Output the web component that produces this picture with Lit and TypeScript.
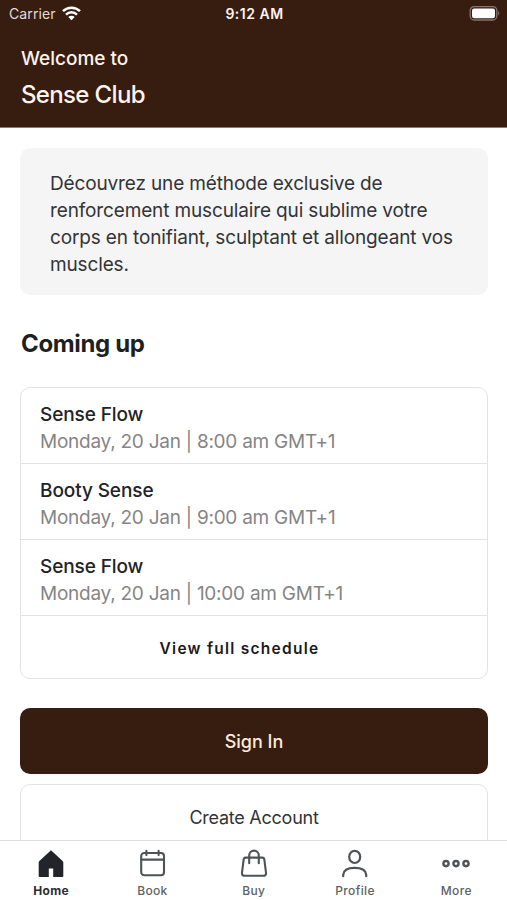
import { LitElement, html, css, svg } from "lit";
import { customElement, property } from "lit/decorators.js";
import { classMap } from "lit/directives/class-map.js";

interface Session {
  title: string;
  time: string;
}

const sessions: Session[] = [
  { title: "Sense Flow", time: "Monday, 20 Jan | 8:00 am GMT+1" },
  { title: "Booty Sense", time: "Monday, 20 Jan | 9:00 am GMT+1" },
  { title: "Sense Flow", time: "Monday, 20 Jan | 10:00 am GMT+1" },
];

const icons = {
  home: svg`<path d="M15 1.2 L26.6 12 Q27.3 12.7 27.3 13.6 V27 Q27.3 28 26.3 28 H17.2 V19.5 H12.8 V28 H3.7 Q2.7 28 2.7 27 V13.6 Q2.7 12.7 3.4 12 Z" fill="currentColor"/>`,
  book: svg`<g fill="none" stroke="currentColor" stroke-width="2.1" stroke-linecap="round">
    <rect x="4.2" y="4" width="22.8" height="22.2" rx="3"/><path d="M4.2 10.6H27M9.4 1.7V6.1M21.6 1.7V6.1"/></g>`,
  buy: svg`<g fill="none" stroke="currentColor" stroke-width="2.1" stroke-linecap="round" stroke-linejoin="round">
    <path d="M6.6 8.6H23.4Q25 8.6 25.3 10.2L27 23.6Q27.3 26.8 24.3 26.8H5.7Q2.7 26.8 3 23.6L4.7 10.2Q5 8.6 6.6 8.6Z"/>
    <path d="M10.2 14.2V6.4A4.8 4.8 0 0 1 19.8 6.4V14.2"/></g>`,
  profile: svg`<g fill="none" stroke="currentColor" stroke-width="2.2" stroke-linecap="round">
    <ellipse cx="14.7" cy="7.9" rx="5.5" ry="6.1"/><path d="M3.2 27.2V25.8Q3.7 18.8 14.7 18.8Q25.7 18.8 26.2 25.8V27.2"/></g>`,
  more: svg`<g fill="none" stroke="currentColor" stroke-width="2.4">
    <circle cx="5" cy="14.6" r="2.6"/><circle cx="15" cy="14.6" r="2.6"/><circle cx="25" cy="14.6" r="2.6"/></g>`,
};

type IconName = keyof typeof icons;

@customElement("tab-item")
class TabItem extends LitElement {
  @property() icon: IconName = "home";
  @property() label = "";
  @property({ type: Boolean }) active = false;

  static styles = css`
    :host { display: block; flex: 1; }
    .tab { display: flex; flex-direction: column; align-items: center; color: #505356; }
    .icon { width: 30px; height: 30px; display: block; }
    .label { margin-top: 4.5px; font: 500 12px/16px Inter, sans-serif; letter-spacing: 0.35px; color: #5f6163; }
    .active { color: #212429; }
    .active .label { font-weight: 700; color: #2c2e31; }
  `;

  render() {
    return html`<div class=${classMap({ tab: true, active: this.active })}>
      <svg class="icon" viewBox="0 0 30 30">${icons[this.icon]}</svg>
      <span class="label">${this.label}</span>
    </div>`;
  }
}

@customElement("app-root")
class AppRoot extends LitElement {
  static styles = css`
    :host {
      display: flex; flex-direction: column; height: 900px; overflow: hidden;
      background: #fff; color: #333437; font-family: Inter, "Liberation Sans", sans-serif;
    }
    * { box-sizing: border-box; }
    .header { flex: none; height: 128px; background: #371c10; color: #fdf3ec; border-bottom: 1px solid #8d7a72; }
    .status { display: grid; grid-template-columns: 1fr auto 1fr; align-items: center; height: 26px; padding: 0 7px 0 9px; }
    .carrier { display: flex; align-items: center; gap: 6px; font-size: 14px; letter-spacing: 0.1px; color: #e4dbd6; }
    .wifi { width: 19px; height: 15px; }
    .clock { font-size: 14px; font-weight: 600; letter-spacing: 0.5px; }
    .battery { width: 31px; height: 16px; justify-self: end; }
    .welcome { padding: 20px 21px 0; font-size: 19px; line-height: 26px; font-weight: 500; }
    .club { padding: 8px 21px 0; font-size: 24px; line-height: 30px; font-weight: 500; letter-spacing: -0.65px; }
    .content { flex: 1; min-height: 0; overflow: hidden; padding: 20px 19px 0 20px; }
    .intro { height: 147px; padding: 22px 30px; border-radius: 10px; background: #f5f5f5; font-size: 19px; line-height: 27px; letter-spacing: -0.14px; white-space: nowrap; }
    .heading { margin: 34px 0 0 1px; font-size: 24px; line-height: 30px; font-weight: 700; letter-spacing: -0.35px; color: #1d1f22; }
    .list { margin-top: 28px; height: 292px; border: 1px solid #e2e2e2; border-radius: 10px; }
    .session { height: 76px; padding: 13px 19px 0; border-bottom: 1px solid #e2e2e2; font-size: 19px; line-height: 27px; }
    .title { font-weight: 500; letter-spacing: -0.1px; color: #212326; }
    .time { letter-spacing: -0.25px; color: #858585; }
    .all { height: 63px; padding: 1px 29px 0 0; display: flex; align-items: center; justify-content: center; font-size: 15.5px; font-weight: 600; letter-spacing: 1.25px; color: #1a1b1d; }
    .button { display: flex; align-items: center; justify-content: center; height: 66px; border-radius: 10px; font-size: 18px; }
    .primary { margin-top: 29px; background: #371c10; color: #fdeadf; font-weight: 500; }
    .secondary { margin-top: 10px; border: 1px solid #e2e2e2; letter-spacing: -0.25px; }
    .tabs { flex: none; display: flex; height: 60px; padding: 7.5px 0 0 0.5px; border-top: 1px solid #dedede; background: #fff; }
  `;

  render() {
    return html`
      <header class="header">
        <div class="status">
          <div class="carrier"><span class="carrier-name">Carrier</span>
            <svg class="wifi" viewBox="0 0 19 15">
              <g fill="none" stroke="#fff" stroke-width="2.5">
                <path d="M1 5.2A12.2 12.2 0 0 1 18 5.2"/><path d="M4 8.6A7.9 7.9 0 0 1 15 8.6"/>
              </g>
              <path d="M6.3 11A4.6 4.6 0 0 1 12.7 11L9.5 14.3Z" fill="#fff"/>
            </svg>
          </div>
          <span class="clock">9:12 AM</span>
          <svg class="battery" viewBox="0 0 31 16">
            <rect x="1.2" y="1.6" width="26.6" height="13.4" rx="4" fill="none" stroke="#87766f" stroke-width="1.3"/>
            <rect x="3" y="3.4" width="23" height="9.8" rx="2.2" fill="#fff"/>
            <path d="M29.2 5.8Q31.2 8.3 29.2 10.8Z" fill="#87766f"/>
          </svg>
        </div>
        <div class="welcome"><span>Welcome to</span></div>
        <div class="club"><span>Sense Club</span></div>
      </header>
      <main class="content">
        <div class="intro">
          Découvrez une méthode exclusive de<br />renforcement musculaire qui sublime votre<br />corps en
          tonifiant, sculptant et allongeant vos<br />muscles.
        </div>
        <h2 class="heading">Coming up</h2>
        <section class="list">
          ${sessions.map(
            (s) => html`<div class="session">
              <div class="title">${s.title}</div>
              <div class="time">${s.time}</div>
            </div>`
          )}
          <div class="all">View full schedule</div>
        </section>
        <div class="button primary">Sign In</div>
        <div class="button secondary">Create Account</div>
      </main>
      <nav class="tabs">
        <tab-item icon="home" label="Home" active></tab-item>
        <tab-item icon="book" label="Book"></tab-item>
        <tab-item icon="buy" label="Buy"></tab-item>
        <tab-item icon="profile" label="Profile"></tab-item>
        <tab-item icon="more" label="More"></tab-item>
      </nav>
    `;
  }
}
